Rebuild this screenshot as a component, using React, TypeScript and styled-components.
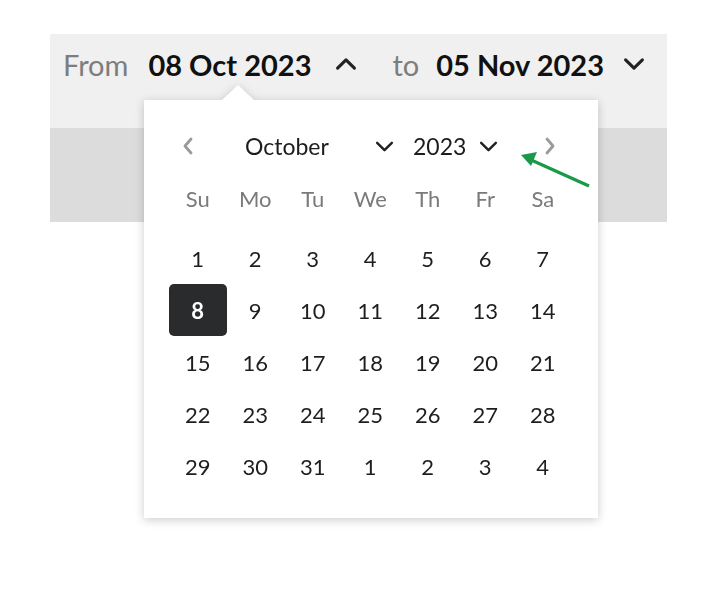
import React from 'react';
import styled, { createGlobalStyle } from 'styled-components';

const GlobalStyle = createGlobalStyle`
  html, body {
    margin: 0;
    padding: 0;
    background: #ffffff;
    font-family: Lato, "Noto Sans", sans-serif;
  }
`;

const WEEKDAYS = ['Su', 'Mo', 'Tu', 'We', 'Th', 'Fr', 'Sa'];

type Day = { label: number; selected?: boolean };

const buildDays = (): Day[] => {
  const days: Day[] = [];
  for (let d = 1; d <= 31; d++) days.push({ label: d, selected: d === 8 });
  for (let d = 1; d <= 4; d++) days.push({ label: d });
  return days;
};

const Styled = {
  Page: styled.div`
    position: relative;
    width: 720px;
    height: 606px;
    padding: 34px 0 0 50px;
    box-sizing: border-box;
  `,
  Frame: styled.div`
    position: relative;
    width: 617px;
  `,
  Bar: styled.div`
    height: 94px;
    background: #f0f0f0;
    display: flex;
    align-items: flex-start;
    padding-left: 13px;
    box-sizing: border-box;
  `,
  BarRow: styled.div`
    display: flex;
    align-items: center;
    height: 60px;
  `,
  Label: styled.span<{ $gap: number }>`
    font-size: 29px;
    color: #7d7d7d;
    margin-right: ${({ $gap }) => $gap}px;
  `,
  Value: styled.span<{ $gap: number }>`
    font-size: 29px;
    font-weight: 700;
    color: #111111;
    margin-right: ${({ $gap }) => $gap}px;
  `,
  ChevronBtn: styled.span<{ $gap: number }>`
    display: inline-flex;
    margin-right: ${({ $gap }) => $gap}px;
  `,
  Band: styled.div`
    height: 94px;
    background: #dcdcdc;
  `,
  Popup: styled.div`
    position: absolute;
    left: 94px;
    top: 66px;
    width: 454px;
    background: #ffffff;
    box-sizing: border-box;
    padding: 20px 26px 26px 25px;
    filter: drop-shadow(0 2px 5px rgba(0, 0, 0, 0.2));
    &::before {
      content: '';
      position: absolute;
      left: 78px;
      top: -15px;
      border-left: 16px solid transparent;
      border-right: 16px solid transparent;
      border-bottom: 15px solid #ffffff;
    }
  `,
  Header: styled.div`
    height: 52px;
    display: flex;
    align-items: center;
  `,
  NavBtn: styled.span<{ $margin: string }>`
    display: inline-flex;
    margin: ${({ $margin }) => $margin};
  `,
  Select: styled.span<{ $width: number }>`
    display: inline-flex;
    align-items: center;
    justify-content: space-between;
    width: ${({ $width }) => $width}px;
    font-size: 23px;
    color: #1c1c1c;
  `,
  Grid: styled.div<{ $gapBelow?: number }>`
    display: grid;
    grid-template-columns: repeat(7, 57.5px);
    grid-auto-rows: 52px;
    margin-bottom: ${({ $gapBelow }) => $gapBelow ?? 0}px;
  `,
  Weekday: styled.div`
    display: flex;
    align-items: center;
    justify-content: center;
    font-size: 22px;
    color: #7a7a7a;
  `,
  Cell: styled.div<{ $selected?: boolean }>`
    display: flex;
    align-items: center;
    justify-content: center;
    font-size: 22px;
    color: ${({ $selected }) => ($selected ? '#ffffff' : '#1e1e1e')};
    font-weight: ${({ $selected }) => ($selected ? 700 : 400)};
    background: ${({ $selected }) => ($selected ? '#2a2b2c' : 'transparent')};
    border-radius: 5px;
  `,
  Arrow: styled.svg`
    position: absolute;
    left: 515px;
    top: 148px;
  `,
};

type ChevronProps = {
  dir: 'up' | 'down' | 'left' | 'right';
  size?: number;
  color?: string;
  width?: number;
};

const Chevron = ({ dir, size = 20, color = '#222', width = 2.6 }: ChevronProps) => {
  const paths = {
    up: 'M3 13.5 L10 6.5 L17 13.5',
    down: 'M3 6.5 L10 13.5 L17 6.5',
    left: 'M13 3 L7 10 L13 17',
    right: 'M7 3 L13 10 L7 17',
  };
  return (
    <svg width={size} height={size} viewBox="0 0 20 20" fill="none">
      <path d={paths[dir]} stroke={color} strokeWidth={width} strokeLinecap="round" strokeLinejoin="round" />
    </svg>
  );
};

export default function App() {
  const days = buildDays();
  return (
    <>
      <GlobalStyle />
      <Styled.Page>
        <Styled.Frame>
          <Styled.Bar>
            <Styled.BarRow>
              <Styled.Label $gap={20}>From</Styled.Label>
              <Styled.Value $gap={23}>08 Oct 2023</Styled.Value>
              <Styled.ChevronBtn $gap={34}>
                <Chevron dir="up" size={24} width={2.6} />
              </Styled.ChevronBtn>
              <Styled.Label $gap={17}>to</Styled.Label>
              <Styled.Value $gap={18}>05 Nov 2023</Styled.Value>
              <Styled.ChevronBtn $gap={0}>
                <Chevron dir="down" size={24} width={2.6} />
              </Styled.ChevronBtn>
            </Styled.BarRow>
          </Styled.Bar>
          <Styled.Band />
          <Styled.Popup>
            <Styled.Header>
              <Styled.NavBtn $margin="0 0 0 9px">
                <Chevron dir="left" color="#9a9a9a" width={2.8} />
              </Styled.NavBtn>
              <Styled.NavBtn $margin="0 0 0 47px">
                <Styled.Select $width={150}>
                  October
                  <Chevron dir="down" size={21} width={2.3} />
                </Styled.Select>
              </Styled.NavBtn>
              <Styled.NavBtn $margin="0 0 0 18px">
                <Styled.Select $width={86}>
                  2023
                  <Chevron dir="down" size={21} width={2.3} />
                </Styled.Select>
              </Styled.NavBtn>
              <Styled.NavBtn $margin="0 0 0 41px">
                <Chevron dir="right" color="#9a9a9a" width={2.8} />
              </Styled.NavBtn>
            </Styled.Header>
            <Styled.Grid $gapBelow={8}>
              {WEEKDAYS.map((w) => (
                <Styled.Weekday key={w}>{w}</Styled.Weekday>
              ))}
            </Styled.Grid>
            <Styled.Grid>
              {days.map((d, i) => (
                <Styled.Cell key={i} $selected={d.selected}>
                  {d.label}
                </Styled.Cell>
              ))}
            </Styled.Grid>
          </Styled.Popup>
        </Styled.Frame>
        <Styled.Arrow width="80" height="45" viewBox="0 0 80 45">
          <line x1="74" y1="38" x2="14" y2="11" stroke="#1a9a48" strokeWidth="3.2" />
          <polygon points="6,7 22,4 16,18" fill="#1a9a48" />
        </Styled.Arrow>
      </Styled.Page>
    </>
  );
}
